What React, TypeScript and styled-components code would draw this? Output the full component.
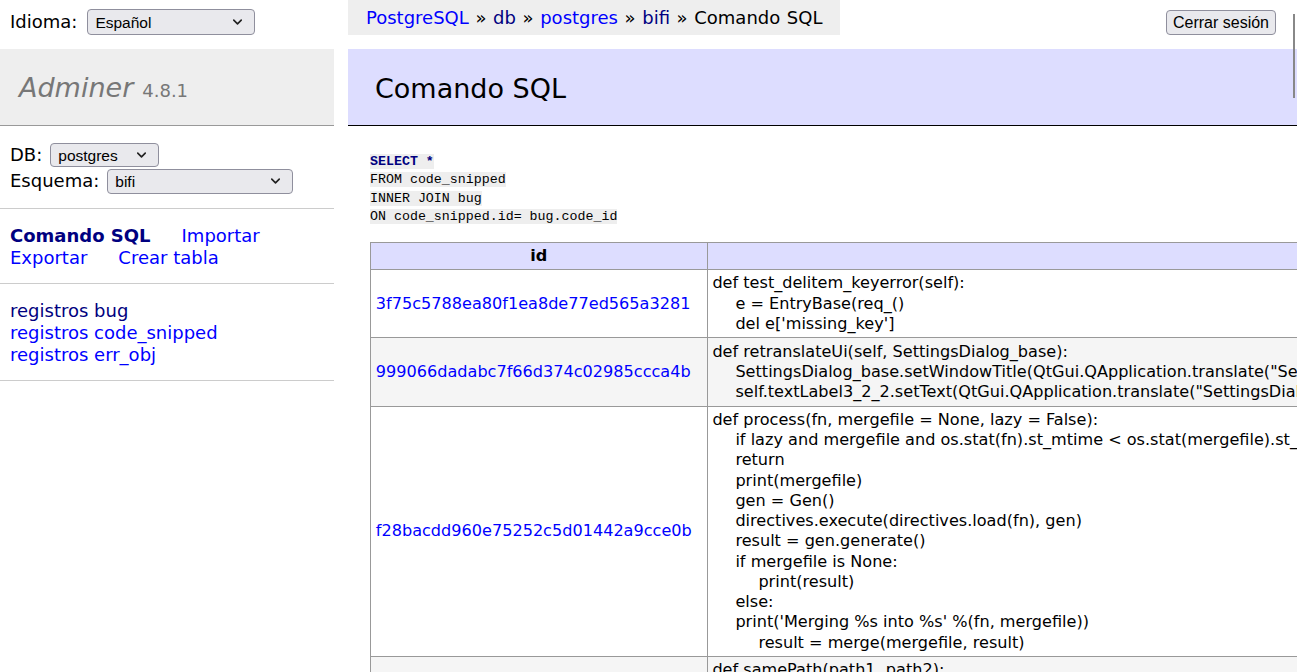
import * as React from 'react';
import styled, { createGlobalStyle } from 'styled-components';
import { ChevronDown } from 'lucide-react';

const GlobalStyle = createGlobalStyle`
    html, body {
        margin: 0;
        padding: 0;
        overflow: hidden;
        background: #fff;
    }
    body {
        font-family: 'DejaVu Sans', Verdana, sans-serif;
        font-size: 18px;
        line-height: 22px;
        color: #000;
    }
`;

const Page = styled.div`
    position: relative;
    display: grid;
    grid-template-columns: 334px 1fr;
    column-gap: 14px;
    width: 1297px;
    min-height: 672px;
`;

const Sidebar = styled.aside`
    display: flex;
    flex-direction: column;
`;

const LangBar = styled.div`
    display: flex;
    align-items: center;
    gap: 10px;
    height: 44px;
    padding: 0 10px;
    margin-bottom: 5px;
`;

const Label = styled.span`
    white-space: nowrap;
`;

const SelectWrap = styled.span<{ $width: number; $height?: number }>`
    position: relative;
    display: inline-flex;
    width: ${(p) => p.$width}px;
    height: ${(p) => p.$height ?? 25}px;

    svg {
        position: absolute;
        right: 10px;
        top: 50%;
        transform: translateY(-50%);
        pointer-events: none;
    }
`;

const Select = styled.select`
    appearance: none;
    width: 100%;
    height: 100%;
    padding: 0 24px 0 7px;
    border: 1px solid #8f8f9d;
    border-radius: 4px;
    background: #e9e9ed;
    color: #000;
    font-family: 'Liberation Sans', Arial, sans-serif;
    font-size: 15.5px;
`;

const Logo = styled.h1`
    box-sizing: border-box;
    margin: 0;
    height: 77px;
    padding: 2px 19px 0;
    display: flex;
    align-items: center;
    gap: 9px;
    background: #eee;
    border-bottom: 1px solid #999;
    font-size: 27px;
    font-weight: normal;
    color: #777;
`;

const LogoName = styled.a`
    font-style: italic;
    color: #777;
    text-decoration: none;
`;

const Version = styled.span`
    font-size: 18px;
    color: #777;
    padding-top: 5px;
`;

const MenuSection = styled.div`
    padding: 16px 10px 14px;
    border-bottom: 1px solid #ccc;
`;

const FieldRow = styled.div`
    display: flex;
    align-items: center;
    gap: 8px;
    height: 26px;
`;

const Links = styled.div`
    display: flex;
    flex-wrap: wrap;
    column-gap: 31px;
    width: 300px;
`;

const MenuLink = styled.a<{ $visited?: boolean; $active?: boolean }>`
    color: ${(p) => (p.$visited ? 'navy' : 'blue')};
    font-weight: ${(p) => (p.$active ? 'bold' : 'normal')};
    text-decoration: none;
    white-space: nowrap;
`;

const TableList = styled.ul`
    list-style: none;
    margin: 0;
    padding: 0;
`;

const Main = styled.main`
    display: flex;
    flex-direction: column;
    min-width: 0;
`;

const TopBar = styled.div`
    display: flex;
    align-items: flex-start;
    justify-content: space-between;
    height: 49px;
`;

const Breadcrumb = styled.nav`
    height: 35px;
    line-height: 35px;
    padding: 0 18px;
    background: #eee;
    white-space: nowrap;
    word-spacing: 0.9px;
`;

const Crumb = styled.a<{ $visited?: boolean }>`
    color: ${(p) => (p.$visited ? 'navy' : 'blue')};
    text-decoration: none;
`;

const LogoutButton = styled.button`
    margin: 10px 21px 0 0;
    height: 25px;
    padding: 0 6px;
    border: 1px solid #8f8f9d;
    border-radius: 4px;
    background: #e9e9ed;
    color: #000;
    font-family: 'Liberation Sans', Arial, sans-serif;
    font-size: 16px;
`;

const ScrollMark = styled.div`
    position: absolute;
    top: 14px;
    right: 2px;
    width: 2px;
    height: 84px;
    background: #888;
`;

const Title = styled.h2`
    box-sizing: border-box;
    margin: 0;
    height: 77px;
    padding: 3px 27px 0;
    display: flex;
    align-items: center;
    background: #ddf;
    border-bottom: 1px solid #000;
    font-size: 27px;
    font-weight: normal;
    color: #000;
    white-space: nowrap;
`;

const Content = styled.div`
    padding: 27px 0 0 22px;
`;

const SqlBlock = styled.pre`
    margin: 0;
    font-family: 'Liberation Mono', 'DejaVu Sans Mono', monospace;
    font-size: 13.3px;
    line-height: 18.4px;
    white-space: pre;
`;

const SqlLine = styled.code`
    background: #eee;
    font-family: inherit;
`;

const Keyword = styled.span`
    color: navy;
    font-weight: bold;
`;

const ResultTable = styled.table`
    margin-top: 15px;
    border-collapse: collapse;
    font-size: 16.1px;
    line-height: 20.27px;
`;

const HeadCell = styled.th`
    padding: 3.2px 4.8px;
    border: 1px solid #999;
    background: #ddf;
    font-weight: bold;
    text-align: center;
    white-space: nowrap;
`;

const Row = styled.tr<{ $odd?: boolean }>`
    background: ${(p) => (p.$odd ? '#f5f5f5' : '#fff')};
`;

const IdCell = styled.td`
    padding: 3.2px 4.8px;
    border: 1px solid #999;
    vertical-align: middle;
    white-space: nowrap;
`;

const IdLink = styled.a`
    display: inline-block;
    min-width: 326px;
    color: blue;
    text-decoration: none;
`;

const CodeCell = styled.td`
    padding: 3.2px 4.8px;
    border: 1px solid #999;
    vertical-align: top;
`;

const CodeLine = styled.div<{ $indent: number }>`
    padding-left: ${(p) => p.$indent * 23}px;
    white-space: pre;
`;

type Line = [number, string];

const rows: { id: string; code: Line[] }[] = [
    {
        id: '3f75c5788ea80f1ea8de77ed565a3281',
        code: [
            [0, 'def test_delitem_keyerror(self):'],
            [1, 'e = EntryBase(req_()'],
            [1, "del e['missing_key']"],
        ],
    },
    {
        id: '999066dadabc7f66d374c02985ccca4b',
        code: [
            [0, 'def retranslateUi(self, SettingsDialog_base):'],
            [1, 'SettingsDialog_base.setWindowTitle(QtGui.QApplication.translate("SettingsDialog_base", "Settings", None, QtGui.QApplication.UnicodeUTF8))'],
            [1, 'self.textLabel3_2_2.setText(QtGui.QApplication.translate("SettingsDialog_base", "Use the following language for the user interface:", None, QtGui.QApplication.UnicodeUTF8))'],
        ],
    },
    {
        id: 'f28bacdd960e75252c5d01442a9cce0b',
        code: [
            [0, 'def process(fn, mergefile = None, lazy = False):'],
            [1, 'if lazy and mergefile and os.stat(fn).st_mtime < os.stat(mergefile).st_mtime:'],
            [1, 'return'],
            [1, 'print(mergefile)'],
            [1, 'gen = Gen()'],
            [1, 'directives.execute(directives.load(fn), gen)'],
            [1, 'result = gen.generate()'],
            [1, 'if mergefile is None:'],
            [2, 'print(result)'],
            [1, 'else:'],
            [1, "print('Merging %s into %s' %(fn, mergefile))"],
            [2, 'result = merge(mergefile, result)'],
        ],
    },
    {
        id: '5b1e0c4a2f9d83e7a6c4d2b1f0e9a8c7',
        code: [
            [0, 'def samePath(path1, path2):'],
            [1, 'return os.path.normcase(os.path.abspath(path1)) == os.path.normcase(os.path.abspath(path2))'],
        ],
    },
];

const Sel = ({ value, width, height }: { value: string; width: number; height?: number }) => (
    <SelectWrap $width={width} $height={height}>
        <Select defaultValue={value}>
            <option>{value}</option>
        </Select>
        <ChevronDown size={15} strokeWidth={2.6} color="#222" />
    </SelectWrap>
);

export default function App() {
    return (
        <>
            <GlobalStyle />
            <Page>
                <Sidebar>
                    <LangBar>
                        <Label>Idioma:</Label>
                        <Sel value="Español" width={168} height={26} />
                    </LangBar>
                    <Logo>
                        <LogoName href="#">Adminer</LogoName>
                        <Version>4.8.1</Version>
                    </Logo>
                    <MenuSection>
                        <FieldRow>
                            <Label>DB:</Label>
                            <Sel value="postgres" width={109} height={24} />
                        </FieldRow>
                        <FieldRow>
                            <Label>Esquema:</Label>
                            <Sel value="bifi" width={186} height={25} />
                        </FieldRow>
                    </MenuSection>
                    <MenuSection>
                        <Links>
                            <MenuLink href="#" $visited $active>Comando SQL</MenuLink>
                            <MenuLink href="#">Importar</MenuLink>
                            <MenuLink href="#">Exportar</MenuLink>
                            <MenuLink href="#">Crear tabla</MenuLink>
                        </Links>
                    </MenuSection>
                    <MenuSection>
                        <TableList>
                            <li><MenuLink href="#" $visited>registros bug</MenuLink></li>
                            <li><MenuLink href="#">registros code_snipped</MenuLink></li>
                            <li><MenuLink href="#">registros err_obj</MenuLink></li>
                        </TableList>
                    </MenuSection>
                </Sidebar>
                <Main>
                    <TopBar>
                        <Breadcrumb>
                            <Crumb href="#">PostgreSQL</Crumb> » <Crumb href="#" $visited>db</Crumb> »{' '}
                            <Crumb href="#">postgres</Crumb> » <Crumb href="#" $visited>bifi</Crumb> » Comando SQL
                        </Breadcrumb>
                        <LogoutButton>Cerrar sesión</LogoutButton>
                    </TopBar>
                    <Title>Comando SQL</Title>
                    <Content>
                        <SqlBlock>
                            <SqlLine><Keyword>SELECT *</Keyword></SqlLine>{'\n'}
                            <SqlLine>FROM code_snipped</SqlLine>{'\n'}
                            <SqlLine>INNER JOIN bug</SqlLine>{'\n'}
                            <SqlLine>ON code_snipped.id= bug.code_id</SqlLine>
                        </SqlBlock>
                        <ResultTable>
                            <thead>
                                <tr>
                                    <HeadCell>id</HeadCell>
                                    <HeadCell>code</HeadCell>
                                </tr>
                            </thead>
                            <tbody>
                                {rows.map((row, i) => (
                                    <Row key={row.id} $odd={i % 2 === 1}>
                                        <IdCell>
                                            <IdLink href="#">{row.id}</IdLink>
                                        </IdCell>
                                        <CodeCell>
                                            {row.code.map(([indent, text], j) => (
                                                <CodeLine key={j} $indent={indent}>{text}</CodeLine>
                                            ))}
                                        </CodeCell>
                                    </Row>
                                ))}
                            </tbody>
                        </ResultTable>
                    </Content>
                </Main>
                <ScrollMark />
            </Page>
        </>
    );
}
